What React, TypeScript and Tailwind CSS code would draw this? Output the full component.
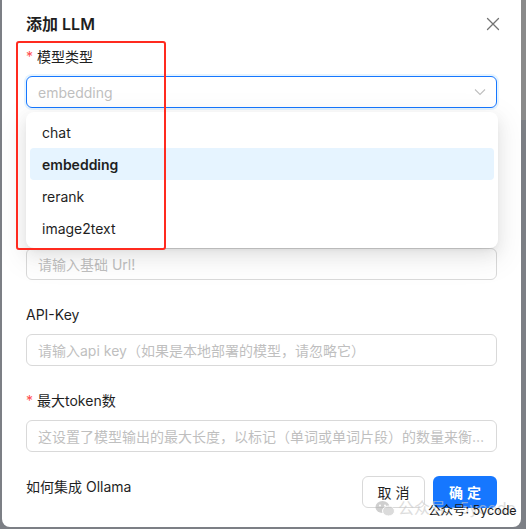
import React from "react";

const font = { fontFamily: "Inter, 'Noto Sans CJK SC', 'Noto Sans', sans-serif" };

function Label({ text, required }: { text: string; required?: boolean }) {
  return (
    <div className="h-[22px] mb-2 flex items-center text-[14px] leading-[22px] text-[#1f1f1f]">
      {required && <span className="text-[#ff4d4f] mr-1 text-[14px]">*</span>}
      <span>{text}</span>
    </div>
  );
}

function Input({ placeholder }: { placeholder: string }) {
  return (
    <div className="h-8 rounded-md border border-[#d9d9d9] px-[11px] flex items-center text-[14px] text-[#bfbfbf] whitespace-nowrap overflow-hidden">
      <span className="truncate">{placeholder}</span>
    </div>
  );
}

export default function App() {
  return (
    <div style={font} className="w-[526px] h-[529px] bg-[#7c7f85] overflow-hidden relative">
      <div className="absolute right-0 top-0 w-[6px] h-[120px] bg-[#8a8a8a]" />
      <div className="relative ml-[2px] w-[519px] h-[527px] bg-white rounded-b-lg px-6 pt-3">
        {/* header */}
        <div className="flex items-center justify-between h-6">
          <span className="text-[16px] font-semibold text-[#1f1f1f] leading-6">添加 LLM</span>
          <svg width="14" height="14" viewBox="0 0 14 14" className="mr-[-3px]">
            <path d="M1.5 1.5 L12.5 12.5 M12.5 1.5 L1.5 12.5" stroke="#737373" strokeWidth="1.3" strokeLinecap="round" />
          </svg>
        </div>
        <div className="mt-[10px] flex flex-col">
          {/* model type */}
          <div className="mb-6">
            <Label text="模型类型" required />
            <div className="h-8 rounded-md border border-[#1677ff] shadow-[0_0_0_2px_rgba(5,145,255,0.1)] px-[11px] flex items-center justify-between text-[14px] text-[#bfbfbf]">
              <span>embedding</span>
              <svg width="12" height="8" viewBox="0 0 12 8" className="mr-[-1px]">
                <path d="M1 1.5 L6 6.5 L11 1.5" fill="none" stroke="#bfbfbf" strokeWidth="1.1" />
              </svg>
            </div>
          </div>
          {/* model name (hidden under dropdown) */}
          <div className="mb-6">
            <Label text="模型名称" required />
            <Input placeholder="请输入模型名称" />
          </div>
          {/* base url */}
          <div className="mb-6">
            <Label text="基础 Url" required />
            <Input placeholder="请输入基础 Url!" />
          </div>
          <div className="mb-6">
            <Label text="API-Key" />
            <Input placeholder="请输入api key（如果是本地部署的模型，请忽略它）" />
          </div>
          <div className="mb-6">
            <Label text="最大token数" required />
            <Input placeholder="这设置了模型输出的最大长度，以标记（单词或单词片段）的数量来衡量。" />
          </div>
          <div className="flex items-start justify-between h-8">
            <span className="text-[14px] leading-[22px] text-[#1f1f1f]">如何集成 Ollama</span>
            <div className="flex gap-2">
              <button className="h-8 w-[63px] rounded-md border border-[#d9d9d9] bg-white text-[14px] text-[#1f1f1f] tracking-[4px] pl-[4px]">取消</button>
              <button className="h-8 w-[64px] rounded-md bg-[#1677ff] text-[14px] text-white font-semibold tracking-[4px] pl-[4px]">确定</button>
            </div>
          </div>
        </div>

        {/* dropdown */}
        <div className="absolute left-6 top-[112px] w-[472px] h-[136px] bg-white rounded-lg p-1 shadow-[0_6px_16px_0_rgba(0,0,0,0.08),0_3px_6px_-4px_rgba(0,0,0,0.12),0_9px_28px_8px_rgba(0,0,0,0.05)] text-[14px] text-[#1f1f1f]">
          <div className="h-8 px-3 flex items-center">chat</div>
          <div className="h-8 px-3 flex items-center bg-[#e6f4ff] rounded font-semibold">embedding</div>
          <div className="h-8 px-3 flex items-center">rerank</div>
          <div className="h-8 px-3 flex items-center">image2text</div>
        </div>

        {/* red highlight box */}
        <div className="absolute left-[14px] top-[41px] w-[150px] h-[209px] border-[2.5px] border-[#ff2a1f] rounded-[3px]" />

        {/* watermark */}
        <div className="absolute left-[373px] top-[496px] flex items-center gap-[3px] opacity-60">
          <svg width="20" height="17" viewBox="0 0 20 17">
            <ellipse cx="7.5" cy="7" rx="7" ry="6" fill="#b0b0b0" />
            <ellipse cx="13.5" cy="11" rx="6" ry="5" fill="#c4c4c4" stroke="#fff" strokeWidth="1" />
            <circle cx="5" cy="5.5" r="1" fill="#fff" />
            <circle cx="10" cy="5.5" r="1" fill="#fff" />
          </svg>
          <span className="text-[16px] text-[#c8c8c8]">公众号 · 5ycode</span>
        </div>
        <div className="absolute left-[426px] top-[503px] text-[12.5px] text-[#1a1a1a] leading-4 whitespace-nowrap">公众号: 5ycode</div>
      </div>
    </div>
  );
}
